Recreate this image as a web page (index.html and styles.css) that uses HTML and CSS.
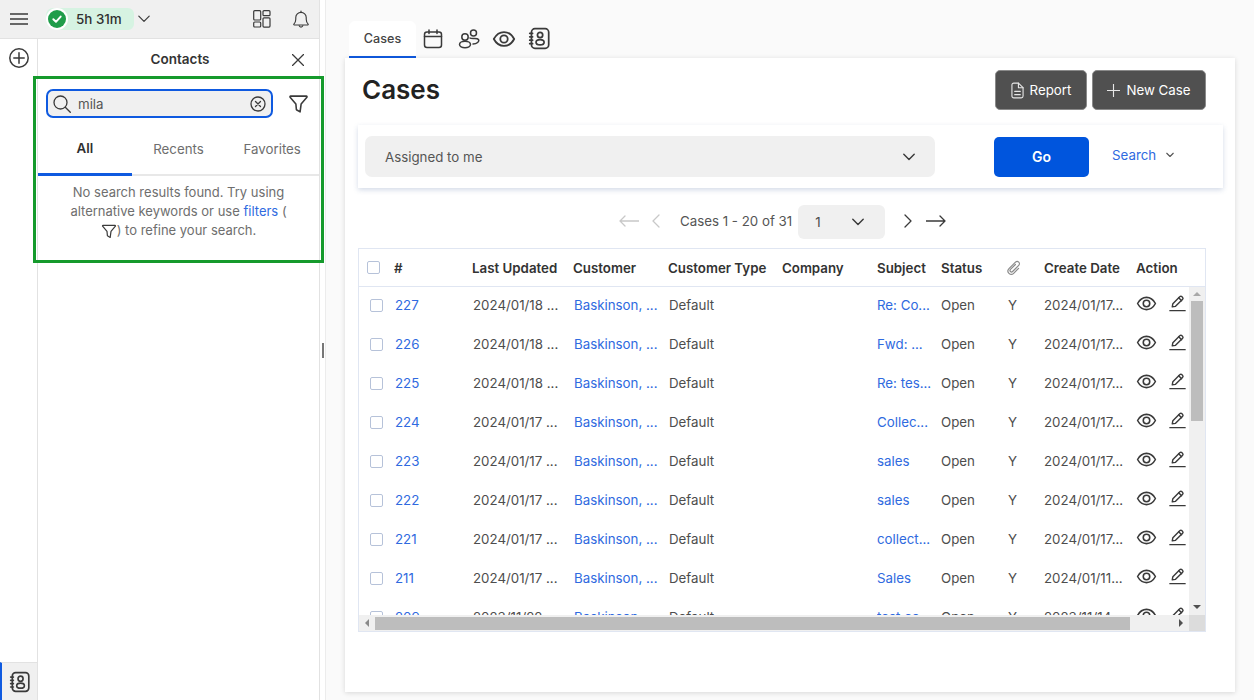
FILE: index.html
```html
<!DOCTYPE html>
<html lang="en">
<head>
    <meta charset="UTF-8">
    <meta name="viewport" content="width=device-width, initial-scale=1.0">
    <title>Cases</title>
    <link rel="stylesheet" href="styles.css">
</head>
<body>
    <svg class="sprites" aria-hidden="true">
        <symbol id="i-eye" viewBox="0 0 20 20"><path d="M1.500 10C3.600 6.100 6.500 4.200 10 4.200s6.400 1.900 8.500 5.800c-2.100 3.900-5 5.800-8.500 5.800S3.600 13.900 1.500 10z"/><circle cx="10" cy="10" r="3.100"/></symbol>
        <symbol id="i-pen" viewBox="0 0 20 20"><path d="M4.500 13.500l.6-3.300L12.600 2.700a1.300 1.300 0 0 1 1.900 0l.9.9a1.300 1.300 0 0 1 0 1.900L7.900 13z"/><path d="M11.300 4l3 3"/><path d="M2 17.500h16"/></symbol>
        <symbol id="i-funnel" viewBox="0 0 20 20"><path d="M2.500 3h15a.6.6 0 0 1 .5 1l-5.500 6.500-1 7.500-3.500-2-.5-5.500L2 4a.6.6 0 0 1 .5-1z"/></symbol>
        <symbol id="i-book" viewBox="0 0 20 20"><rect x="3" y="1.500" width="15" height="17" rx="3"/><path d="M1.500 5.500h2.500M1.500 8.500h2.500M1.500 11.500h2.500M1.500 14.500h2.500"/><circle cx="10.500" cy="7" r="2.300"/><ellipse cx="10.500" cy="13.300" rx="3.500" ry="2.300"/></symbol>
        <symbol id="i-chev" viewBox="0 0 20 20"><path d="M3.500 6.500L10 13l6.500-6.500"/></symbol>
    </svg>

    <aside class="sidebar">
        <div class="topbar">
            <svg class="icon hamburger" viewBox="0 0 18 12"><path d="M0 1h18M0 6h18M0 11h18"/></svg>
            <div class="timer">
                <span class="timer-check"><svg viewBox="0 0 16 16"><path d="M3.800 8.300l3 2.900 5.400-6"/></svg></span>
                <span>5h 31m</span>
            </div>
            <svg class="icon timer-chev"><use href="#i-chev"/></svg>
            <svg class="icon layout-icon" viewBox="0 0 18 18"><rect x=".7" y=".7" width="7" height="9.300" rx="1"/><rect x=".7" y="12" width="7" height="5" rx="1"/><rect x="10" y=".7" width="7" height="5" rx="1"/><rect x="10" y="7.800" width="7" height="9.300" rx="1"/></svg>
            <svg class="icon bell-icon" viewBox="0 0 18 20"><path d="M1.500 14.800c1.400-1.300 2-2.600 2-5V8a5.500 5.500 0 0 1 11 0v1.800c0 2.400.6 3.700 2 5a.6.6 0 0 1-.4 1H1.900a.6.6 0 0 1-.4-1z"/><path d="M7 16.500a2.100 2.100 0 0 0 4 0M9 1v1.500"/></svg>
        </div>
        <div class="sidebar-body">
            <nav class="rail">
                <svg class="icon rail-add" viewBox="0 0 20 20"><circle cx="10" cy="10" r="9.200"/><path d="M10 4.800v10.400M4.800 10h10.400"/></svg>
                <div class="rail-tab"><svg class="icon book-icon"><use href="#i-book"/></svg></div>
            </nav>
            <section class="contacts">
                <header class="contacts-head">
                    <h2>Contacts</h2>
                    <svg class="icon contacts-close" viewBox="0 0 12 12"><path d="M.5.500l11 11M11.500.500l-11 11"/></svg>
                </header>
                <div class="search-row">
                    <div class="search-box">
                        <svg class="icon search-icon" viewBox="0 0 18 18"><circle cx="7.500" cy="7.500" r="6.500"/><path d="M12.300 12.300l5 5"/></svg>
                        <span class="search-text">mila</span>
                        <svg class="icon search-clear" viewBox="0 0 16 16"><circle cx="8" cy="8" r="7"/><path d="M5.500 5.500l5 5M10.500 5.500l-5 5"/></svg>
                    </div>
                    <svg class="icon search-filter"><use href="#i-funnel"/></svg>
                </div>
                <div class="contact-tabs">
                    <span class="contact-tab active">All</span>
                    <span class="contact-tab">Recents</span>
                    <span class="contact-tab">Favorites</span>
                </div>
                <p class="no-results">No search results found. Try using alternative keywords or use <a href="#">filters</a> ( <svg class="icon inline-funnel"><use href="#i-funnel"/></svg>) to refine your search.</p>
            </section>
        </div>
        <!-- green highlight drawn over the screenshot -->
        <div class="highlight"></div>
    </aside>

    <div class="splitter"><span class="grip"></span></div>

    <main class="main">
        <div class="tabs">
            <span class="tab active">Cases</span>
            <svg class="icon tab-icon tab-cal" viewBox="0 0 20 20"><rect x="1.500" y="3" width="17" height="15.500" rx="2.500"/><path d="M1.500 7.500h17M6 1v3.500M14 1v3.500"/></svg>
            <svg class="icon tab-icon tab-people" viewBox="0 0 22 20"><circle cx="7" cy="8" r="3.200"/><circle cx="15.500" cy="4" r="3"/><ellipse cx="7" cy="15.500" rx="5.500" ry="3.200"/><path d="M12 9c1.500 1.500 7-.5 8.500 1.500 1 2-1.500 4.500-5.500 4.500"/></svg>
            <svg class="icon tab-icon tab-eye"><use href="#i-eye"/></svg>
            <svg class="icon tab-icon tab-book"><use href="#i-book"/></svg>
        </div>

        <div class="card">
            <div class="card-head">
                <h1>Cases</h1>
                <div class="actions">
                    <button class="btn-dark report">
                        <svg class="icon" viewBox="0 0 14 18"><path d="M1 3a2 2 0 0 1 2-2h5l5 5v9a2 2 0 0 1-2 2H3a2 2 0 0 1-2-2z"/><path d="M8 1v5h5M4 10h6M4 13.500h6"/></svg>
                        Report
                    </button>
                    <button class="btn-dark new-case">
                        <svg class="icon" viewBox="0 0 14 14"><path d="M7 0v14M0 7h14"/></svg>
                        New Case
                    </button>
                </div>
            </div>

            <div class="filter-bar">
                <div class="filter-select">
                    <span>Assigned to me</span>
                    <svg class="icon chev"><use href="#i-chev"/></svg>
                </div>
                <button class="btn-go">Go</button>
                <a class="search-link" href="#">Search<svg class="icon"><use href="#i-chev"/></svg></a>
            </div>

            <div class="pager">
                <svg class="icon pager-long muted" viewBox="0 0 20 12"><path d="M20 6H1M6 1L1 6l5 5"/></svg>
                <svg class="icon pager-short muted" viewBox="0 0 8 14"><path d="M7 1L1 7l6 6"/></svg>
                <span class="pager-text">Cases 1 - 20 of 31</span>
                <div class="pager-select"><span>1</span><svg class="icon chev"><use href="#i-chev"/></svg></div>
                <svg class="icon pager-short next" viewBox="0 0 8 14"><path d="M1 1l6 6-6 6"/></svg>
                <svg class="icon pager-long" viewBox="0 0 20 12"><path d="M0 6h19M14 1l5 5-5 5"/></svg>
            </div>

            <div class="table-box">
                <div class="row head-row">
                    <span class="cell-check"><span class="checkbox"></span></span>
                    <span>#</span>
                    <span>Last Updated</span>
                    <span>Customer</span>
                    <span>Customer Type</span>
                    <span>Company</span>
                    <span>Subject</span>
                    <span>Status</span>
                    <span class="clip-cell"><svg class="icon clip-icon" viewBox="0 0 16 16"><g transform="rotate(45 8 8)"><path d="M6.500 4.500v7a1.500 1.500 0 0 0 3 0V2.800a2.300 2.300 0 0 0-4.600 0V12a3.300 3.300 0 0 0 6.600 0V5"/></g></svg></span>
                    <span>Create Date</span>
                    <span>Action</span>
                </div>
                <div class="table-middle">
                    <div class="rows">
                        <div class="row"><span class="cell-check"><span class="checkbox"></span></span><a href="#">227</a><span>2024/01/18 ...</span><a href="#">Baskinson, ...</a><span>Default</span><span></span><a href="#">Re: Co...</a><span>Open</span><span>Y</span><span>2024/01/17...</span><span class="row-actions"><svg class="icon"><use href="#i-eye"/></svg><svg class="icon"><use href="#i-pen"/></svg></span></div>
                        <div class="row"><span class="cell-check"><span class="checkbox"></span></span><a href="#">226</a><span>2024/01/18 ...</span><a href="#">Baskinson, ...</a><span>Default</span><span></span><a href="#">Fwd: ...</a><span>Open</span><span>Y</span><span>2024/01/17...</span><span class="row-actions"><svg class="icon"><use href="#i-eye"/></svg><svg class="icon"><use href="#i-pen"/></svg></span></div>
                        <div class="row"><span class="cell-check"><span class="checkbox"></span></span><a href="#">225</a><span>2024/01/18 ...</span><a href="#">Baskinson, ...</a><span>Default</span><span></span><a href="#">Re: tes...</a><span>Open</span><span>Y</span><span>2024/01/17...</span><span class="row-actions"><svg class="icon"><use href="#i-eye"/></svg><svg class="icon"><use href="#i-pen"/></svg></span></div>
                        <div class="row"><span class="cell-check"><span class="checkbox"></span></span><a href="#">224</a><span>2024/01/17 ...</span><a href="#">Baskinson, ...</a><span>Default</span><span></span><a href="#">Collec...</a><span>Open</span><span>Y</span><span>2024/01/17...</span><span class="row-actions"><svg class="icon"><use href="#i-eye"/></svg><svg class="icon"><use href="#i-pen"/></svg></span></div>
                        <div class="row"><span class="cell-check"><span class="checkbox"></span></span><a href="#">223</a><span>2024/01/17 ...</span><a href="#">Baskinson, ...</a><span>Default</span><span></span><a href="#">sales</a><span>Open</span><span>Y</span><span>2024/01/17...</span><span class="row-actions"><svg class="icon"><use href="#i-eye"/></svg><svg class="icon"><use href="#i-pen"/></svg></span></div>
                        <div class="row"><span class="cell-check"><span class="checkbox"></span></span><a href="#">222</a><span>2024/01/17 ...</span><a href="#">Baskinson, ...</a><span>Default</span><span></span><a href="#">sales</a><span>Open</span><span>Y</span><span>2024/01/17...</span><span class="row-actions"><svg class="icon"><use href="#i-eye"/></svg><svg class="icon"><use href="#i-pen"/></svg></span></div>
                        <div class="row"><span class="cell-check"><span class="checkbox"></span></span><a href="#">221</a><span>2024/01/17 ...</span><a href="#">Baskinson, ...</a><span>Default</span><span></span><a href="#">collect...</a><span>Open</span><span>Y</span><span>2024/01/17...</span><span class="row-actions"><svg class="icon"><use href="#i-eye"/></svg><svg class="icon"><use href="#i-pen"/></svg></span></div>
                        <div class="row"><span class="cell-check"><span class="checkbox"></span></span><a href="#">211</a><span>2024/01/17 ...</span><a href="#">Baskinson, ...</a><span>Default</span><span></span><a href="#">Sales</a><span>Open</span><span>Y</span><span>2024/01/11...</span><span class="row-actions"><svg class="icon"><use href="#i-eye"/></svg><svg class="icon"><use href="#i-pen"/></svg></span></div>
                        <div class="row"><span class="cell-check"><span class="checkbox"></span></span><a href="#">209</a><span>2023/11/22 ...</span><a href="#">Baskinson, ...</a><span>Default</span><span></span><a href="#">test.co...</a><span>Open</span><span>Y</span><span>2023/11/14...</span><span class="row-actions"><svg class="icon"><use href="#i-eye"/></svg><svg class="icon"><use href="#i-pen"/></svg></span></div>
                    </div>
                    <div class="vscroll">
                        <span class="arrow-up"></span>
                        <span class="vthumb"></span>
                        <span class="arrow-down"></span>
                    </div>
                </div>
                <div class="hscroll">
                    <span class="arrow-left"></span>
                    <span class="hthumb"></span>
                    <span class="arrow-right"></span>
                    <span class="corner"></span>
                </div>
            </div>
        </div>
    </main>
</body>
</html>
```

FILE: styles.css
```css
* {
    box-sizing: border-box;
}
body {
    margin: 0;
    width: 1254px;
    height: 700px;
    display: flex;
    overflow: hidden;
    font-family: Inter, "Liberation Sans", sans-serif;
    font-size: 13.300px;
    color: #4d4d4d;
    background: #fafafa;
}
a {
    color: #2f6ae0;
    text-decoration: none;
}
h1, h2, p {
    margin: 0;
}
button {
    font-family: inherit;
    cursor: pointer;
}
.sprites {
    display: none;
}
.icon {
    fill: none;
    stroke: #3a3a3a;
    stroke-width: 1.500;
    stroke-linecap: round;
    stroke-linejoin: round;
    flex: none;
}

/* Left side panel */
.sidebar {
    position: relative;
    width: 320px;
    flex: none;
    display: flex;
    flex-direction: column;
    background: #fff;
    border-right: 1px solid #e2e2e2;
}
.topbar {
    height: 39px;
    flex: none;
    display: flex;
    align-items: center;
    padding-left: 10px;
    background: #f0f0f0;
    border-bottom: 1px solid #e2e2e2;
}
.hamburger {
    width: 18px;
    height: 12px;
    stroke-width: 1.300;
}
.timer {
    display: flex;
    align-items: center;
    width: 88px;
    height: 22px;
    margin-left: 18px;
    padding-left: 2px;
    gap: 10px;
    background: #d6f3e2;
    border-radius: 7px 6px 6px 11px;
    font-size: 13.400px;
    font-weight: 500;
    color: #2f2f2f;
}
.timer-check {
    width: 18px;
    height: 18px;
    border-radius: 50%;
    background: #1f9d4a;
    box-shadow: 0 0 0 2px #fff;
    flex: none;
    display: flex;
    align-items: center;
    justify-content: center;
}
.timer-check svg {
    width: 14px;
    height: 14px;
    fill: none;
    stroke: #fff;
    stroke-width: 2.200;
    stroke-linecap: round;
    stroke-linejoin: round;
}
.timer-chev {
    width: 16px;
    height: 16px;
    margin-left: 2px;
}
.layout-icon {
    width: 18px;
    height: 18px;
    margin-left: 101px;
    stroke-width: 1.200;
}
.bell-icon {
    width: 18px;
    height: 19px;
    margin-left: 21px;
    stroke-width: 1.200;
}
.sidebar-body {
    flex: 1;
    display: flex;
    min-height: 0;
}
.rail {
    width: 38px;
    flex: none;
    display: flex;
    flex-direction: column;
    align-items: center;
    justify-content: space-between;
    padding-top: 9px;
    border-right: 1px solid #e2e2e2;
}
.rail-add {
    width: 20px;
    height: 20px;
}
.rail-tab {
    width: 37px;
    height: 38px;
    display: flex;
    align-items: center;
    justify-content: center;
    background: #f0f0f0;
    border-left: 2px solid #0f5ae0;
    border-top: 1px solid #e2e2e2;
}
.book-icon {
    width: 22px;
    height: 22px;
}
.contacts {
    flex: 1;
    min-width: 0;
}
.contacts-head {
    position: relative;
    height: 41px;
    display: flex;
    align-items: center;
    justify-content: center;
    padding: 0 0 2px 3px;
}
.contacts-head h2 {
    font-size: 13.500px;
    font-weight: 600;
    color: #333;
}
.contacts-close {
    position: absolute;
    right: 15px;
    top: 15px;
    width: 12px;
    height: 12px;
    stroke-width: 1.300;
}
.search-row {
    display: flex;
    align-items: center;
    height: 29px;
    margin-top: 9px;
    padding-left: 8px;
}
.search-box {
    width: 227px;
    height: 29px;
    display: flex;
    align-items: center;
    padding: 0 5px;
    background: #f0f0f0;
    border: 2px solid #0f5ae0;
    border-radius: 7px;
}
.search-icon {
    width: 18px;
    height: 18px;
    stroke-width: 1.300;
}
.search-text {
    flex: 1;
    margin-left: 7px;
    font-size: 13.300px;
    color: #555;
}
.search-clear {
    width: 16px;
    height: 16px;
    stroke-width: 1.300;
}
.search-filter {
    width: 21px;
    height: 21px;
    margin-left: 15px;
}
.contact-tabs {
    display: flex;
    height: 46px;
    margin-top: 12px;
    border-bottom: 2px solid #e8e8e8;
}
.contact-tab {
    width: 94px;
    display: flex;
    align-items: center;
    justify-content: center;
    height: 46px;
    padding-bottom: 8px;
    color: #6e6e6e;
}
.contact-tab.active {
    font-weight: 600;
    color: #2f2f2f;
    border-bottom: 3px solid #0f5ae0;
}
.no-results {
    padding: 7px 24px 0 24px;
    text-align: center;
    line-height: 19px;
    font-size: 13px;
    color: #6e6e6e;
}
.inline-funnel {
    width: 16px;
    height: 16px;
    vertical-align: -4px;
}
.highlight {
    position: absolute;
    left: 33px;
    top: 76px;
    width: 291px;
    height: 187px;
    border: 3px solid #159a2c;
    pointer-events: none;
}

.splitter {
    width: 6px;
    flex: none;
    display: flex;
    align-items: center;
    background: #fff;
    border-right: 1px solid #ececec;
}
.grip {
    width: 2px;
    height: 15px;
    margin-left: 2px;
    background: #777;
}

/* Main area */
.main {
    flex: 1;
    min-width: 0;
    padding: 21px 19px 8px 19px;
    display: flex;
    flex-direction: column;
}
.tabs {
    height: 37px;
    flex: none;
    display: flex;
    align-items: center;
    padding-left: 4px;
}
.tab {
    width: 67px;
    height: 37px;
    display: flex;
    align-items: center;
    justify-content: center;
    padding-bottom: 1px;
    background: #fff;
    border-radius: 6px 6px 0 0;
    border-bottom: 2px solid #0f5ae0;
    font-size: 12.600px;
    font-weight: 500;
    color: #444;
    margin-right: 7px;
}
.tab-icon {
    margin-bottom: 2px;
}
.tab-cal {
    width: 20px;
    height: 20px;
    margin-right: 15px;
}
.tab-people {
    width: 22px;
    height: 22px;
    margin-right: 12px;
}
.tab-eye {
    width: 24px;
    height: 24px;
    margin-right: 12px;
}
.tab-book {
    width: 23px;
    height: 23px;
    margin-bottom: 3px;
}
.card {
    flex: 1;
    min-height: 0;
    background: #fff;
    box-shadow: 0 1px 5px rgba(0, 0, 0, 0.14);
    padding: 12px 12px 0 13px;
}
.card-head {
    display: flex;
    align-items: center;
    justify-content: space-between;
    height: 40px;
    padding-left: 4px;
    padding-right: 17px;
}
.card-head h1 {
    font-size: 26px;
    font-weight: 600;
    color: #222;
    margin-bottom: 2px;
}
.actions {
    display: flex;
    gap: 5px;
}
.btn-dark {
    height: 40px;
    display: flex;
    align-items: center;
    justify-content: center;
    gap: 6px;
    background: #505050;
    border: 1px solid #8a8a8a;
    border-radius: 5px;
    color: #fff;
    font-size: 13.300px;
}
.btn-dark .icon {
    stroke: #e6e6e6;
    stroke-width: 1.200;
}
.report {
    width: 92px;
}
.report .icon {
    width: 13px;
    height: 17px;
}
.new-case {
    width: 114px;
}
.new-case .icon {
    width: 13px;
    height: 13px;
}
.filter-bar {
    height: 63px;
    margin-top: 15px;
    display: flex;
    align-items: center;
    padding-left: 7px;
    background: #fff;
    box-shadow: 0 2px 5px rgba(60, 90, 150, 0.22);
}
.filter-select {
    width: 570px;
    height: 41px;
    display: flex;
    align-items: center;
    justify-content: space-between;
    padding: 0 18px 0 20px;
    background: #f0f0f0;
    border-radius: 7px;
    color: #555;
}
.chev {
    width: 16px;
    height: 16px;
    stroke-width: 1.800;
}
.btn-go {
    width: 95px;
    height: 40px;
    margin-left: 59px;
    background: #0055dd;
    border: none;
    border-radius: 5px;
    color: #fff;
    font-size: 14px;
    font-weight: 600;
}
.search-link {
    margin-left: 23px;
    display: flex;
    align-items: center;
    gap: 9px;
    margin-top: -3px;
}
.search-link .icon {
    width: 10px;
    height: 10px;
    stroke: #555;
    stroke-width: 2.200;
}
.pager {
    height: 34px;
    margin-top: 17px;
    display: flex;
    align-items: center;
    padding-left: 261px;
}
.pager .muted {
    stroke: #c8c8c8;
}
.pager-long {
    width: 20px;
    height: 12px;
    stroke-width: 1.300;
    margin-top: -3px;
}
.pager-short {
    width: 8px;
    height: 14px;
    margin-left: 13px;
    margin-top: -3px;
    stroke-width: 1.300;
}
.pager-text {
    margin-left: 20px;
    margin-top: -3px;
    color: #555;
}
.pager-select {
    width: 87px;
    height: 34px;
    margin-left: 6px;
    display: flex;
    align-items: center;
    justify-content: space-between;
    padding: 0 19px 0 17px;
    background: #f0f0f0;
    border-radius: 6px;
}
.pager-short.next {
    margin-left: 19px;
    margin-right: 14px;
}

/* Cases table */
.table-box {
    width: 848px;
    margin-top: 9px;
    border: 1.500px solid #e0e6f2;
}
.row {
    display: grid;
    grid-template-columns: 35px 78px 101px 95px 114px 95px 64px 66px 37px 92px 1fr;
    align-items: center;
    height: 39px;
    white-space: nowrap;
}
.row > * {
    overflow: hidden;
}
.head-row {
    height: 38px;
    font-weight: 600;
    color: #333;
    border-bottom: 1.500px solid #e0e6f2;
}
.cell-check {
    display: flex;
    padding-left: 11px;
}
.head-row .cell-check {
    padding-left: 8px;
}
.checkbox {
    width: 13px;
    height: 13px;
    background: #fff;
    border: 1px solid #b6c2d9;
    border-radius: 2px;
}
.clip-cell {
    margin-left: -1px;
}
.clip-icon {
    width: 16px;
    height: 16px;
    stroke: #8a8a8a;
    stroke-width: 1.200;
    display: block;
}
.table-middle {
    display: flex;
    height: 328px;
}
.rows {
    flex: 1;
    min-width: 0;
    overflow: hidden;
}
.rows .row:first-child {
    margin-top: -2px;
}
.rows .cell-check {
    margin-top: 2px;
}
.rows .row > :nth-child(2),
.rows .row > :nth-child(3),
.rows .row > :nth-child(4),
.rows .row > :nth-child(5),
.rows .row > :nth-child(9) {
    padding-left: 1px;
}
.row-actions {
    display: flex;
    align-items: center;
    gap: 11px;
    margin-top: -3px;
}
.row-actions .icon {
    width: 21px;
    height: 21px;
}
.row-actions .icon + .icon {
    width: 19px;
    height: 19px;
}
.vscroll {
    width: 16px;
    flex: none;
    display: flex;
    flex-direction: column;
    align-items: center;
    background: #f0f0f0;
}
.vthumb {
    width: 12px;
    height: 120px;
    background: #bdbdbd;
}
.arrow-up, .arrow-down {
    width: 0;
    height: 0;
    border-left: 4px solid transparent;
    border-right: 4px solid transparent;
}
.arrow-up {
    margin: 5px 0;
    border-bottom: 4px solid #a8a8a8;
}
.arrow-down {
    margin-top: auto;
    margin-bottom: 6px;
    border-top: 4px solid #505050;
}
.hscroll {
    height: 16px;
    display: flex;
    align-items: center;
    background: #f0f0f0;
}
.arrow-left, .arrow-right {
    width: 0;
    height: 0;
    border-top: 4px solid transparent;
    border-bottom: 4px solid transparent;
}
.arrow-left {
    margin-left: 6px;
    border-right: 4px solid #8a8a8a;
}
.hthumb {
    width: 755px;
    height: 13px;
    margin-left: 6px;
    background: #bdbdbd;
}
.arrow-right {
    margin-left: 49px;
    border-left: 4px solid #505050;
}
.corner {
    width: 16px;
    height: 16px;
    margin-left: auto;
    background: #dcdcdc;
}
```
